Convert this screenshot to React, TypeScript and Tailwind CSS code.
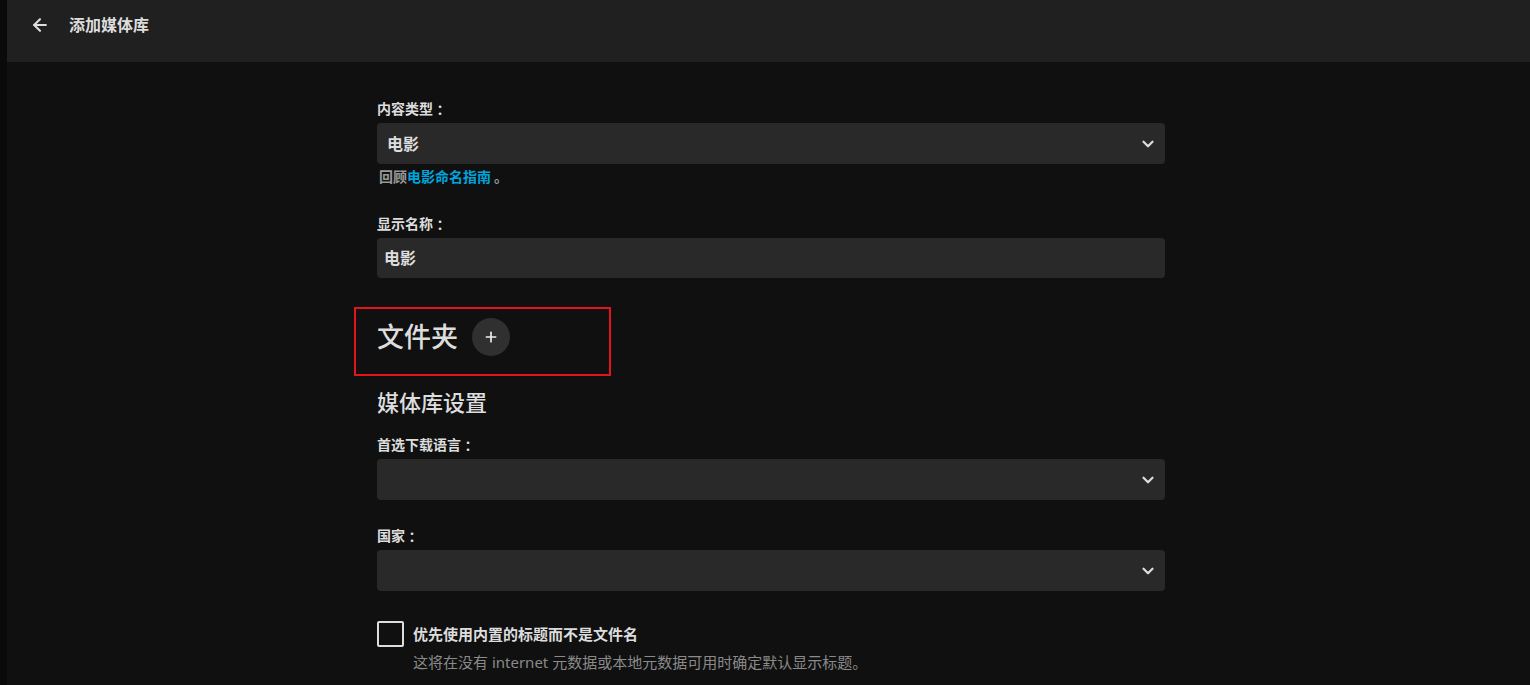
import React from 'react';
import { ArrowLeft, ChevronDown, Plus } from 'lucide-react';

const SelectBox: React.FC<{ value?: string }> = ({ value }) => (
    <div className="h-[41px] w-full flex items-center justify-between rounded-[4px] bg-[#292929] pl-[10px] pr-[8px]">
        <span className="text-[16px] font-bold text-[#dddddd]">{value}</span>
        <ChevronDown size={18} strokeWidth={3} className="text-[#dddddd]" />
    </div>
);

// the colon glyph sits centred in JP, like the reference
const Label: React.FC<{ text: string }> = ({ text }) => (
    <div className="h-[20px] text-[14px] leading-[20px] font-bold text-[#dddddd] mb-1 flex items-center">
        <span>{text}</span>
        <span className="font-['Noto_Sans_CJK_JP',sans-serif]">：</span>
    </div>
);

export default function App() {
    return (
        <div className="w-full h-[685px] flex bg-[#0a0a0a] overflow-hidden [text-spacing-trim:space-all] font-['Noto_Sans','Noto_Sans_CJK_SC',sans-serif]">
            <div className="w-[7px] flex-shrink-0" />
            <div className="flex-1 flex flex-col bg-[#101010]">
                {/* Header */}
                <div className="h-[62px] flex-shrink-0 flex items-center bg-[#202020] pl-[23px] pb-[12px]">
                    <ArrowLeft size={20} strokeWidth={2.5} className="text-[#dddddd]" />
                    <span className="ml-[19px] text-[16px] font-bold text-[#dddddd]">添加媒体库</span>
                </div>

                {/* Form */}
                <div className="w-[788px] ml-[370px] pt-[37px]">
                    <Label text="内容类型" />
                    <SelectBox value="电影" />
                    <div className="mt-[3px] pl-[2px] text-[14px] leading-[20px] font-bold text-[#999999]">
                        回顾<span className="text-[#00a4dc]">电影命名指南</span>
                        <span className="ml-[3px]">。</span>
                    </div>

                    <div className="mt-[27px]">
                        <Label text="显示名称" />
                        <div className="h-[40px] flex items-center rounded-[4px] bg-[#292929] px-[7px] text-[16px] font-bold text-[#dddddd]">
                            电影
                        </div>
                    </div>

                    <div className="relative mt-[40px] h-[38px] flex items-center">
                        <div className="absolute left-[-23px] top-[-11px] w-[257px] h-[69px] border-2 border-[#e3141c] pointer-events-none" />
                        <h2 className="text-[27px] leading-[38px] font-medium text-[#dddddd]">文件夹</h2>
                        <button className="ml-[14px] w-[38px] h-[38px] rounded-full bg-[#303030] flex items-center justify-center text-[#eeeeee]">
                            <Plus size={16} strokeWidth={2.5} />
                        </button>
                    </div>

                    <h2 className="mt-[31px] text-[22px] leading-[30px] font-medium text-[#dddddd]">媒体库设置</h2>

                    <div className="mt-[18px]">
                        <Label text="首选下载语言" />
                        <SelectBox />
                    </div>

                    <div className="mt-[26px]">
                        <Label text="国家" />
                        <SelectBox />
                    </div>

                    <div className="mt-[30px] flex items-start">
                        <div className="w-[27px] h-[26px] flex-shrink-0 rounded-[2px] border-2 border-[#dddddd]" />
                        <div className="ml-[9px] pt-[3px]">
                            <div className="text-[15px] leading-[20px] font-bold text-[#dddddd]">优先使用内置的标题而不是文件名</div>
                            <div className="mt-[8px] text-[15px] leading-[20px] text-[#8a8a8a]">这将在没有 internet 元数据或本地元数据可用时确定默认显示标题。</div>
                        </div>
                    </div>
                </div>
            </div>
        </div>
    );
}
